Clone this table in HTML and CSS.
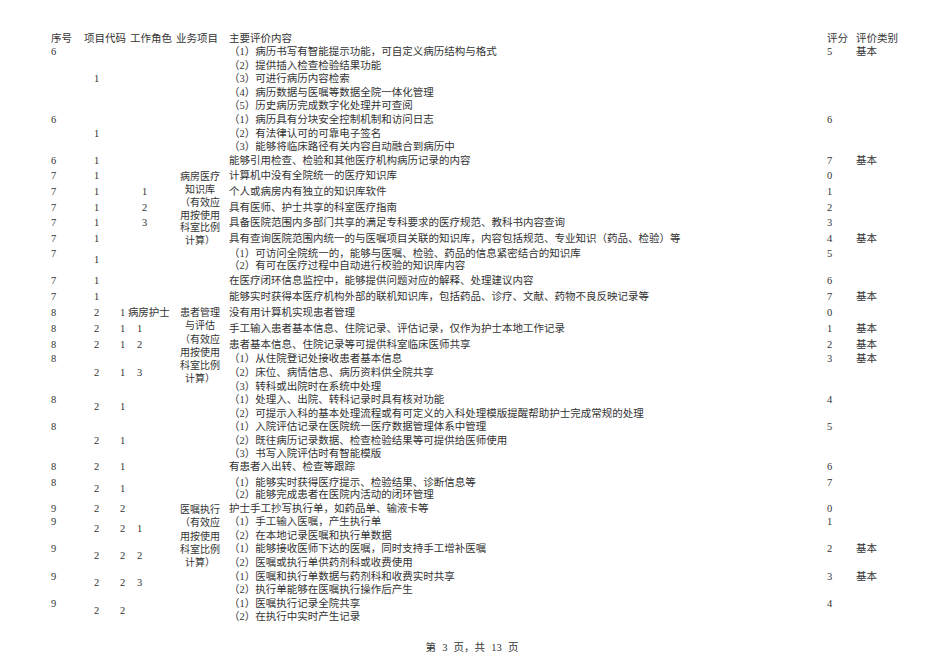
FILE: index.html
```html
<!DOCTYPE html>
<html lang="zh-CN">
<head>
<meta charset="utf-8">
<title>第 3 页</title>
<link rel="stylesheet" href="styles.css">
</head>
<body>
<div class="page">
  <div class="head">
    <div class="h1">序号</div>
    <div class="h2">项目代码</div>
    <div class="h3">工作角色</div>
    <div class="h4">业务项目</div>
    <div class="h5">主要评价内容</div>
    <div class="h6">评分</div>
    <div class="h7">评价类别</div>
  </div>
  <table class="tbl">
    <colgroup>
      <col class="ca"><col class="cb"><col class="cc"><col class="cd"><col class="ce"><col class="cf"><col class="cg"><col class="ch">
    </colgroup>
    <tbody>
      <tr>
        <td>6</td><td class="m">1</td><td></td><td></td><td></td>
        <td>（1）病历书写有智能提示功能，可自定义病历结构与格式<br>（2）提供插入检查检验结果功能<br>（3）可进行病历内容检索<br>（4）病历数据与医嘱等数据全院一体化管理<br>（5）历史病历完成数字化处理并可查阅</td>
        <td>5</td><td>基本</td>
      </tr>
      <tr>
        <td>6</td><td class="m">1</td><td></td><td></td><td></td>
        <td>（1）病历具有分块安全控制机制和访问日志<br>（2）有法律认可的可靠电子签名<br>（3）能够将临床路径有关内容自动融合到病历中</td>
        <td>6</td><td></td>
      </tr>
      <tr>
        <td>6</td><td class="m">1</td><td></td><td></td><td></td>
        <td>能够引用检查、检验和其他医疗机构病历记录的内容</td>
        <td>7</td><td>基本</td>
      </tr>
      <tr class="p2">
        <td>7</td><td class="m">1</td><td></td><td></td>
        <td class="biz biz1" rowspan="8">病房医疗<br>知识库<br>（有效应<br>用按使用<br>科室比例<br>计算）</td>
        <td>计算机中没有全院统一的医疗知识库</td>
        <td>0</td><td></td>
      </tr>
      <tr class="p2">
        <td>7</td><td class="m">1</td><td></td><td class="m s7">1</td>
        <td>个人或病房内有独立的知识库软件</td>
        <td>1</td><td></td>
      </tr>
      <tr class="p2">
        <td>7</td><td class="m">1</td><td></td><td class="m s7">2</td>
        <td>具有医师、护士共享的科室医疗指南</td>
        <td>2</td><td></td>
      </tr>
      <tr class="p2">
        <td>7</td><td class="m">1</td><td></td><td class="m s7">3</td>
        <td>具备医院范围内多部门共享的满足专科要求的医疗规范、教科书内容查询</td>
        <td>3</td><td></td>
      </tr>
      <tr class="p2">
        <td>7</td><td class="m">1</td><td></td><td></td>
        <td>具有查询医院范围内统一的与医嘱项目关联的知识库，内容包括规范、专业知识（药品、检验）等</td>
        <td>4</td><td>基本</td>
      </tr>
      <tr class="p3 lh12">
        <td>7</td><td class="m">1</td><td></td><td></td>
        <td>（1）可访问全院统一的，能够与医嘱、检验、药品的信息紧密结合的知识库<br>（2）有可在医疗过程中自动进行校验的知识库内容</td>
        <td>5</td><td></td>
      </tr>
      <tr class="p2">
        <td>7</td><td class="m">1</td><td></td><td></td>
        <td>在医疗闭环信息监控中，能够提供问题对应的解释、处理建议内容</td>
        <td>6</td><td></td>
      </tr>
      <tr class="p2">
        <td>7</td><td class="m">1</td><td></td><td></td>
        <td>能够实时获得本医疗机构外部的联机知识库，包括药品、诊疗、文献、药物不良反映记录等</td>
        <td>7</td><td>基本</td>
      </tr>
      <tr class="p2">
        <td>8</td><td class="m">2</td><td class="role" colspan="2">1 病房护士</td>
        <td class="biz biz2" rowspan="8">患者管理<br>与评估<br>（有效应<br>用按使用<br>科室比例<br>计算）</td>
        <td>没有用计算机实现患者管理</td>
        <td>0</td><td></td>
      </tr>
      <tr class="p3">
        <td>8</td><td class="m">2</td><td class="m">1</td><td class="m">1</td>
        <td>手工输入患者基本信息、住院记录、评估记录，仅作为护士本地工作记录</td>
        <td>1</td><td>基本</td>
      </tr>
      <tr class="p2">
        <td>8</td><td class="m">2</td><td class="m">1</td><td class="m">2</td>
        <td>患者基本信息、住院记录等可提供科室临床医师共享</td>
        <td>2</td><td>基本</td>
      </tr>
      <tr class="p1">
        <td>8</td><td class="m">2</td><td class="m">1</td><td class="m">3</td>
        <td>（1）从住院登记处接收患者基本信息<br>（2）床位、病情信息、病历资料供全院共享<br>（3）转科或出院时在系统中处理</td>
        <td>3</td><td>基本</td>
      </tr>
      <tr>
        <td>8</td><td class="m">2</td><td class="m">1</td><td></td>
        <td>（1）处理入、出院、转科记录时具有核对功能<br>（2）可提示入科的基本处理流程或有可定义的入科处理模版提醒帮助护士完成常规的处理</td>
        <td>4</td><td></td>
      </tr>
      <tr class="lh13">
        <td>8</td><td class="m">2</td><td class="m">1</td><td></td>
        <td>（1）入院评估记录在医院统一医疗数据管理体系中管理<br>（2）既往病历记录数据、检查检验结果等可提供给医师使用<br>（3）书写入院评估时有智能模版</td>
        <td>5</td><td></td>
      </tr>
      <tr>
        <td>8</td><td class="m">2</td><td class="m">1</td><td></td>
        <td>有患者入出转、检查等跟踪</td>
        <td>6</td><td></td>
      </tr>
      <tr class="p3 lh12">
        <td>8</td><td class="m">2</td><td class="m">1</td><td></td>
        <td>（1）能够实时获得医疗提示、检验结果、诊断信息等<br>（2）能够完成患者在医院内活动的闭环管理</td>
        <td>7</td><td></td>
      </tr>
      <tr class="p1">
        <td>9</td><td class="m">2</td><td class="m">2</td><td></td>
        <td class="biz biz3" rowspan="5">医嘱执行<br>（有效应<br>用按使用<br>科室比例<br>计算）</td>
        <td>护士手工抄写执行单，如药品单、输液卡等</td>
        <td>0</td><td></td>
      </tr>
      <tr>
        <td>9</td><td class="m">2</td><td class="m">2</td><td class="m">1</td>
        <td>（1）手工输入医嘱，产生执行单<br>（2）在本地记录医嘱和执行单数据</td>
        <td>1</td><td></td>
      </tr>
      <tr>
        <td>9</td><td class="m">2</td><td class="m">2</td><td class="m">2</td>
        <td>（1）能够接收医师下达的医嘱，同时支持手工增补医嘱<br>（2）医嘱或执行单供药剂科或收费使用</td>
        <td>2</td><td>基本</td>
      </tr>
      <tr>
        <td>9</td><td class="m">2</td><td class="m">2</td><td class="m">3</td>
        <td>（1）医嘱和执行单数据与药剂科和收费实时共享<br>（2）执行单能够在医嘱执行操作后产生</td>
        <td>3</td><td>基本</td>
      </tr>
      <tr>
        <td>9</td><td class="m">2</td><td class="m">2</td><td></td>
        <td>（1）医嘱执行记录全院共享<br>（2）在执行中实时产生记录</td>
        <td>4</td><td></td>
      </tr>
    </tbody>
  </table>
</div>
<div class="foot">第 3 页，共 13 页</div>
</body>
</html>
```

FILE: styles.css
```css
html, body {
  margin: 0;
  padding: 0;
  background: #ffffff;
}

body {
  width: 950px;
  height: 672px;
  overflow: hidden;
  font-family: "Liberation Serif", "Noto Sans CJK SC", serif;
  font-size: 10.5px;
  color: #333333;
}

.page {
  padding: 31.5px 0 0 51px;
}

.head {
  display: flex;
  line-height: 13.6px;
  white-space: nowrap;
}

.h1 { width: 33px; }
.h2 { width: 46px; }
.h3 { width: 46px; }
.h4 { width: 53px; }
.h5 { width: 598px; }
.h6 { width: 29px; }

.tbl {
  border-collapse: collapse;
  border-spacing: 0;
  table-layout: fixed;
  width: 869px;
}

.ca { width: 43px; }
.cb { width: 26px; }
.cc { width: 17px; }
.cd { width: 38px; }
.ce { width: 54px; }
.cf { width: 598px; }
.cg { width: 29px; }
.ch { width: 64px; }

.tbl td {
  padding: 0;
  line-height: 13.6px;
  vertical-align: top;
  white-space: nowrap;
}

.tbl td.m {
  vertical-align: middle;
}

.tbl td.s7 {
  padding-left: 5px;
}

.tbl tr.p1 > td { padding-top: 1px; }
.tbl tr.p2 > td { padding-top: 2px; }
.tbl tr.p3 > td { padding-top: 3px; }

.tbl tr.lh12 > td { line-height: 12px; }
.tbl tr.lh13 > td { line-height: 13.2px; }

.tbl td.role {
  vertical-align: top;
}

.tbl td.biz {
  font-size: 10px;
  text-align: center;
  padding-right: 4px;
  vertical-align: top;
  white-space: nowrap;
}

.tbl tr > td.biz1 {
  padding-top: 4px;
  line-height: 12.7px;
}

.tbl tr > td.biz2 {
  padding-top: 2.5px;
  line-height: 13.2px;
}

.tbl tr > td.biz3 {
  padding-top: 2.7px;
  line-height: 13.25px;
}

.foot {
  margin-top: 17px;
  padding-right: 6px;
  text-align: center;
  line-height: 13.6px;
  word-spacing: 3.6px;
}
```
